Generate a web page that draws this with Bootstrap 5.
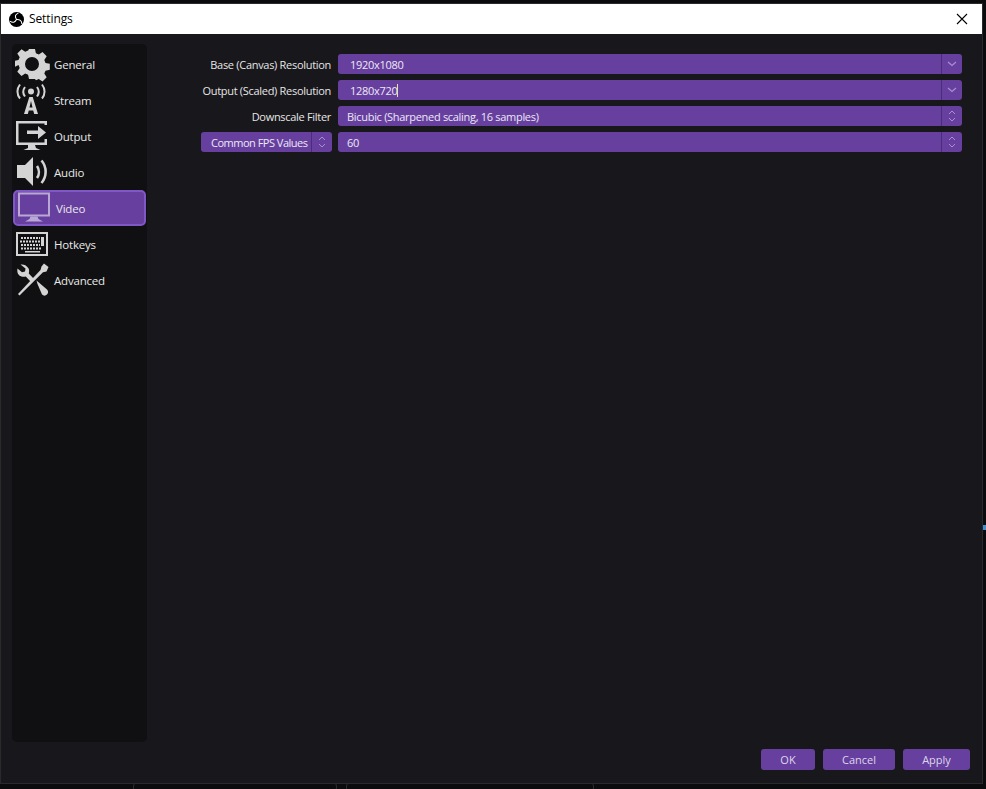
<!DOCTYPE html>
<html lang="en">
<head>
  <meta charset="UTF-8">
  <meta name="viewport" content="width=device-width, initial-scale=1">
  <title>Settings</title>
  <link href="https://cdn.jsdelivr.net/npm/bootstrap@5.3.0/dist/css/bootstrap.min.css" rel="stylesheet">
  <style>
    html, body {
      height: 100%;
    }
    body {
      background-color: #0b0b0d;
      color: #e6e6e6;
      font-family: "Open Sans", "Noto Sans", sans-serif;
      font-size: 11px;
      letter-spacing: -0.3px;
      overflow: hidden;
    }
    .desk {
      width: 986px;
      height: 789px;
      padding: 4px 4px 6px 1px;
    }
    .settings-win {
      height: 779px;
      background-color: #18171c;
      box-shadow: 0 0 0 1px #2a2a2d;
    }
    .title-bar {
      height: 30px;
      background-color: #fff;
      color: #000;
      font-size: 12px;
      letter-spacing: -0.1px;
      padding-left: 8px;
      padding-right: 14px;
    }
    .title-bar svg {
      margin-right: 5px;
    }
    .win-body {
      min-height: 0;
      padding: 10px 20px 13px 11px;
    }
    .side-panel {
      width: 135px;
      height: 698px;
      background-color: #101012;
      border-radius: 5px;
      padding: 2px 1px;
      flex-shrink: 0;
    }
    .side-item {
      height: 36px;
      font-size: 11.500px;
      letter-spacing: -0.2px;
      padding-left: 2px;
      color: #e8e8e8;
    }
    .side-item span {
      position: relative;
      top: 1px;
    }
    .side-item svg {
      width: 36px;
      height: 36px;
      flex-shrink: 0;
      margin-right: 3px;
    }
    .side-item.picked {
      background-color: #67409f;
      border: 2px solid #7f57c6;
      border-radius: 5px;
      padding-left: 1px;
    }
    .side-item.picked span {
      margin-left: 1px;
    }
    .form-side {
      min-width: 0;
      padding-top: 10px;
      padding-left: 54px;
    }
    .form-line {
      height: 20px;
      margin-bottom: 6px;
    }
    .line-label {
      width: 130px;
      margin-right: 7px;
      padding-top: 2px;
      text-align: right;
      white-space: nowrap;
      flex-shrink: 0;
    }
    .purple-box {
      background-color: #67409f;
      border-radius: 3px;
      color: #ece8f4;
      height: 20px;
    }
    .box-text {
      padding-left: 9px;
      padding-top: 2px;
      white-space: nowrap;
      min-width: 0;
    }
    .box-text.edit {
      padding-left: 12px;
    }
    .caret-mark {
      display: inline-block;
      width: 1px;
      height: 13px;
      background-color: #e8e4a0;
      vertical-align: -2px;
    }
    .arrow-cell {
      width: 21px;
      height: 20px;
      border-left: 1px solid #4a2d78;
      flex-shrink: 0;
    }
    .fps-pick {
      width: 131px;
      margin-right: 6px;
      flex-shrink: 0;
    }
    .fps-pick .box-text {
      padding-left: 10px;
      letter-spacing: -0.5px;
    }
    .foot-row {
      gap: 8px;
      right: 12px;
      bottom: 13px;
    }
    .dlg-btn {
      background-color: #67409f;
      border: 0;
      border-radius: 3px;
      color: #dcd6ea;
      font-size: 11px;
      height: 21px;
      padding: 1px 0 0;
    }
    .dlg-btn:hover {
      background-color: #67409f;
      color: #dcd6ea;
    }
    .w-ok { width: 54px; }
    .w-cancel { width: 72px; }
    .w-apply { width: 67px; }
    .bg-bit {
      position: absolute;
    }
  </style>
</head>
<body>
<div class="desk position-relative">

  <!-- bits of the app behind the dialog -->
  <div class="bg-bit" style="left:0;top:570px;width:1px;height:68px;background:#6d1a1a"></div>
  <div class="bg-bit" style="left:983px;top:525px;width:3px;height:5px;background:#3f8fd0"></div>
  <div class="bg-bit" style="left:133px;top:782px;width:204px;height:10px;border:1px solid #2c2c30;border-radius:4px"></div>
  <div class="bg-bit" style="left:346px;top:782px;width:248px;height:10px;border:1px solid #2c2c30;border-radius:4px"></div>

  <div class="settings-win d-flex flex-column position-relative">
    <div class="title-bar d-flex align-items-center flex-shrink-0">
      <svg width="15" height="15" viewBox="0 0 16 16">
        <circle cx="8" cy="8" r="8" fill="#000"/>
        <path d="M8 8C6 5 6.500 2.500 10 1.200M8 8c3.500-.3 5.500 1.200 5.800 4.800M8 8c-1.500 3-4 4-7 1.800" stroke="#fff" stroke-width="1.100" fill="none"/>
      </svg>
      <span>Settings</span>
      <svg class="ms-auto me-0" width="12" height="12" viewBox="0 0 12 12">
        <path d="M1 1l10 10M11 1L1 11" stroke="#000" stroke-width="1.100" fill="none"/>
      </svg>
    </div>

    <div class="win-body d-flex flex-grow-1">
      <div class="side-panel">
        <div class="side-item d-flex align-items-center">
          <svg viewBox="0 0 36 36">
            <path fill="#d4d4d4" fill-rule="evenodd" transform="translate(-1 0)" d="M15 3h6l.9 4.300 2.900 1.200 3.700-2.400 4.200 4.200-2.400 3.700 1.200 2.900 4.300.9v6l-4.300.9-1.200 2.900 2.400 3.700-4.200 4.200-3.700-2.400-2.900 1.200L21 33h-6l-.9-4.300-2.900-1.200-3.700 2.400-4.200-4.200 2.400-3.700-1.200-2.900L.2 21v-6l4.300-.9 1.200-2.900-2.400-3.700 4.200-4.200 3.700 2.400 2.900-1.200zM18 11a7 7 0 1 0 0 14 7 7 0 0 0 0-14z"/>
          </svg>
          <span>General</span>
        </div>
        <div class="side-item d-flex align-items-center">
          <svg viewBox="0 0 36 36">
            <circle cx="16" cy="9.500" r="3" fill="#d4d4d4"/>
            <path d="M10 5c-2.200 3-2.200 6.500 0 9.500M22 5c2.200 3 2.200 6.500 0 9.500M5 2.500c-3.400 4.300-3.400 10 0 14M27 2.500c3.400 4.300 3.400 10 0 14" stroke="#d4d4d4" stroke-width="2" fill="none"/>
            <path fill="#d4d4d4" fill-rule="evenodd" d="M14.300 15h3.400l5.300 17h-3.800l-1-3.400h-4.400l-1 3.400H9zM16 19l-1.500 6.500h3z"/>
          </svg>
          <span>Stream</span>
        </div>
        <div class="side-item d-flex align-items-center">
          <svg viewBox="0 0 36 36">
            <path fill="#d4d4d4" d="M1 3h31v4h-2.500V5.500h-26v19H29.500V21H32v6H1zM13 27h7l1 3 4.500 2H8.500l4.500-2z"/>
            <path fill="#d4d4d4" d="M12 12.500h11V8l8 6.500-8 6.500v-5H12z"/>
          </svg>
          <span>Output</span>
        </div>
        <div class="side-item d-flex align-items-center">
          <svg viewBox="0 0 36 36">
            <path fill="#d4d4d4" d="M2 11h8l8-8v29l-8-8H2z"/>
            <path d="M22 12c2.500 3.500 2.500 8.500 0 12M26.500 6.500c5.500 6.500 5.500 16 0 22.500" stroke="#d4d4d4" stroke-width="2.600" fill="none"/>
          </svg>
          <span>Audio</span>
        </div>
        <div class="side-item picked d-flex align-items-center">
          <svg viewBox="0 0 36 36">
            <path fill="#b9a8d6" fill-rule="evenodd" d="M2 2.500h32v24H2zM4 4.500v20h28v-20z"/>
            <path fill="#b9a8d6" d="M14.500 26.500h7l1 2.500 4.500 2.500H9l4.500-2.500z"/>
          </svg>
          <span>Video</span>
        </div>
        <div class="side-item d-flex align-items-center">
          <svg viewBox="0 0 36 36">
            <path fill="#d4d4d4" fill-rule="evenodd" d="M1 6h32v24H1zM3 8v20h28V8z"/>
            <path stroke="#d4d4d4" stroke-width="2" stroke-dasharray="2 1" fill="none" d="M6 12h19M5 15.500h20M6 19h19M6 22.500h20"/>
            <path fill="#d4d4d4" d="M26 11h3v9h-3zM10 25h15v1.500H10z"/>
          </svg>
          <span>Hotkeys</span>
        </div>
        <div class="side-item d-flex align-items-center">
          <svg viewBox="0 0 36 36">
            <path fill="#d4d4d4" d="M5.500 2.500l5 4-.5 3-3 .8-4.500-3.800c-.8 4 .7 7 4 8 1.500.5 3 .4 4.300-.1l4.700 5 3-3-4.700-5c.5-1.600.5-3.200-.2-4.800C12 3.500 9 2 5.500 2.500zM22.500 22l4.500 10.500c1.500 1.500 3.500 1.500 5 0s1.500-3.500 0-5L21.500 18.500z"/>
            <path fill="#d4d4d4" d="M29 1.500l4.500 3.500-2 4.500-3.500.8L4.500 33.500 3 32 25.500 8 26.500 4.500z"/>
          </svg>
          <span>Advanced</span>
        </div>
      </div>

      <div class="form-side flex-grow-1">
        <div class="form-line d-flex align-items-center">
          <div class="line-label ms-auto">Base (Canvas) Resolution</div>
          <div class="purple-box d-flex align-items-center flex-grow-1">
            <div class="box-text edit flex-grow-1">1920x1080</div>
            <div class="arrow-cell d-flex align-items-center justify-content-center">
              <svg width="10" height="6" viewBox="0 0 10 6"><path d="M1 1l4 3.500L9 1" stroke="#a78fd0" stroke-width="1.200" fill="none"/></svg>
            </div>
          </div>
        </div>
        <div class="form-line d-flex align-items-center">
          <div class="line-label ms-auto">Output (Scaled) Resolution</div>
          <div class="purple-box d-flex align-items-center flex-grow-1">
            <div class="box-text edit flex-grow-1">1280x720<span class="caret-mark"></span></div>
            <div class="arrow-cell d-flex align-items-center justify-content-center">
              <svg width="10" height="6" viewBox="0 0 10 6"><path d="M1 1l4 3.500L9 1" stroke="#a78fd0" stroke-width="1.200" fill="none"/></svg>
            </div>
          </div>
        </div>
        <div class="form-line d-flex align-items-center">
          <div class="line-label ms-auto">Downscale Filter</div>
          <div class="purple-box d-flex align-items-center flex-grow-1">
            <div class="box-text flex-grow-1">Bicubic (Sharpened scaling, 16 samples)</div>
            <div class="arrow-cell d-flex align-items-center justify-content-center">
              <svg width="10" height="14" viewBox="0 0 10 14"><path d="M2 5l3-3 3 3M2 9l3 3 3-3" stroke="#a78fd0" stroke-width="1" fill="none"/></svg>
            </div>
          </div>
        </div>
        <div class="form-line d-flex align-items-center">
          <div class="purple-box fps-pick d-flex align-items-center">
            <div class="box-text flex-grow-1">Common FPS Values</div>
            <div class="arrow-cell d-flex align-items-center justify-content-center">
              <svg width="10" height="14" viewBox="0 0 10 14"><path d="M2 5l3-3 3 3M2 9l3 3 3-3" stroke="#a78fd0" stroke-width="1" fill="none"/></svg>
            </div>
          </div>
          <div class="purple-box d-flex align-items-center flex-grow-1">
            <div class="box-text flex-grow-1">60</div>
            <div class="arrow-cell d-flex align-items-center justify-content-center">
              <svg width="10" height="14" viewBox="0 0 10 14"><path d="M2 5l3-3 3 3M2 9l3 3 3-3" stroke="#a78fd0" stroke-width="1" fill="none"/></svg>
            </div>
          </div>
        </div>
      </div>
    </div>

    <div class="foot-row d-flex position-absolute">
      <button class="btn dlg-btn w-ok">OK</button>
      <button class="btn dlg-btn w-cancel">Cancel</button>
      <button class="btn dlg-btn w-apply">Apply</button>
    </div>
  </div>
</div>

<script src="https://cdn.jsdelivr.net/npm/bootstrap@5.3.0/dist/js/bootstrap.bundle.min.js"></script>
</body>
</html>
